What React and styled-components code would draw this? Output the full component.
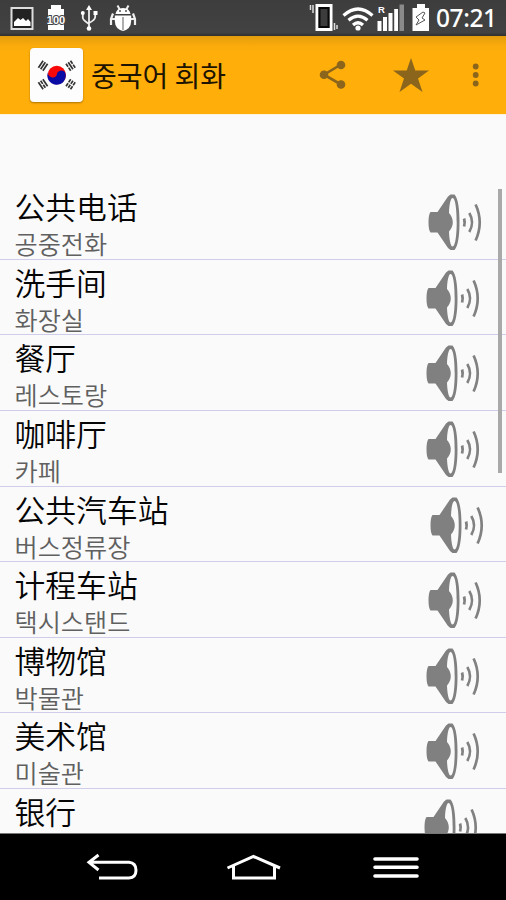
import React from 'react';
import styled, { createGlobalStyle } from 'styled-components';

const Global = createGlobalStyle`
  * { box-sizing: border-box; }
  body { margin: 0; background: #fafafa; }
`;

const Screen = styled.div`
  width: 506px;
  height: 900px;
  display: flex;
  flex-direction: column;
  overflow: hidden;
  background: #fafafa;
  font-family: 'Noto Sans CJK SC', sans-serif;
`;

const StatusBar = styled.header`
  height: 36px;
  flex: none;
  display: flex;
  align-items: flex-start;
  justify-content: space-between;
  background: linear-gradient(#3d3d3d, #424242 90%, #303030);
  color: #fff;
`;

const StatusIcons = styled.svg`
  display: block;
  width: ${(p) => p.$width}px;
  height: 36px;
`;

const StatusRight = styled.div`
  display: flex;
  height: 36px;
`;

const Clock = styled.time`
  width: 70px;
  font: 500 24.5px/36px 'Noto Sans', sans-serif;
  letter-spacing: -0.4px;
`;

const AppBar = styled.div`
  height: 78px;
  flex: none;
  display: flex;
  align-items: center;
  padding-left: 30px;
  background: linear-gradient(#e39d0d, #fbab0b 10px, #ffae0a 16px);
`;

const FlagTile = styled.div`
  width: 53px;
  height: 54px;
  margin-top: -1px;
  border-radius: 4px;
  background: #fdfdfd;
  box-shadow: 0 1px 2px rgba(90, 60, 0, 0.5);
`;

const Title = styled.h1`
  width: 222px;
  margin: -1px 0 0 8px;
  font: 400 28px/40px 'Noto Sans CJK KR', sans-serif;
  color: #1c1300;
  white-space: nowrap;
`;

const Actions = styled.svg`
  display: block;
  width: 193px;
  height: 78px;
`;

const Content = styled.main`
  flex: none;
  height: 720px;
  padding-top: 69px;
  display: grid;
  grid-template-columns: 1fr;
  overflow: hidden;
  border-top: 1px solid #fdf3dc;
  border-bottom: 1px solid #777;
`;

const List = styled.ul`
  grid-area: 1 / 1;
  margin: 0;
  padding: 0;
  list-style: none;
`;

const Row = styled.li`
  height: 75.65px;
  display: flex;
  justify-content: space-between;
  border-bottom: 1.6px solid #cfcdea;
`;

const Words = styled.div`
  padding: 5px 0 0 14.5px;
  white-space: nowrap;
`;

const Chinese = styled.div`
  font: 350 30.8px/34px 'Noto Sans CJK SC', sans-serif;
  color: #050505;
`;

const Korean = styled.div`
  padding-top: 4px;
  font: 350 25.2px/32px 'Noto Sans CJK KR', sans-serif;
  color: #606060;
`;

const Speaker = styled.svg`
  display: block;
  flex: none;
  width: 56px;
  height: 58px;
  margin: 10px ${(p) => 23 - p.$shift}px 0 0;
`;

const ScrollThumb = styled.div`
  grid-area: 1 / 1;
  justify-self: end;
  width: 4px;
  height: 284px;
  margin: 5px 4px 0 0;
  background: #a9a9a9;
`;

const NavBar = styled.nav`
  flex: 1;
  background: #000;
`;

const NavIcons = styled.svg`
  display: block;
  width: 506px;
  height: 66px;
`;

const phrases = [
  ['公共电话', '공중전화', 0.5],
  ['洗手间', '화장실', -1],
  ['餐厅', '레스토랑', -1],
  ['咖啡厅', '카페', -1],
  ['公共汽车站', '버스정류장', 2.5],
  ['计程车站', '택시스탠드', 0.5],
  ['博物馆', '박물관', -1],
  ['美术馆', '미술관', -1],
  ['银行', '', -3],
];

function SpeakerIcon({ shift }) {
  return (
    <Speaker $shift={shift} viewBox="0 0 56 58">
      <path d="M2.5 18H9.500L20 2.500L22.500 0.500H26.500C30 4 31.500 15 31.500 28.300S30 52.500 26.500 56H22.500L20 54L9.500 38.500H2.500Q0.500 36 0.500 28.300T2.500 18Z" fill="#808080" />
      <path d="M24.500 4C27.600 4 28.700 17 28.700 28.300S27.600 52.500 24.500 52.500C22.600 52.500 21.200 45 21 37.500C23.300 35 24.800 32 24.800 28.300S23.300 21.500 21 19C21.200 11 22.600 4 24.500 4Z" fill="#fafafa" />
      <path d="M36.100 24.500Q37.200 28.300 36.100 32.500" stroke="#818181" strokeWidth="2.8" fill="none" />
      <path d="M41.300 19Q46.800 28.300 41.300 38" stroke="#818181" strokeWidth="2.600" fill="none" />
      <path d="M47.600 10.500Q55.800 28.300 47.600 46.500" stroke="#818181" strokeWidth="2.700" fill="none" />
    </Speaker>
  );
}

const barOffsets = [-2.7, 0, 2.7];
const trigrams = [
  { x: -13.8, y: -9.3, turn: 34, broken: [] },
  { x: 13.8, y: -9.3, turn: -34, broken: [0, 2] },
  { x: -13.8, y: 9.3, turn: -34, broken: [1] },
  { x: 13.8, y: 9.3, turn: 34, broken: [0, 1, 2] },
];

function Flag() {
  return (
    <FlagTile>
      <svg width="53" height="54" viewBox="0 0 53 54">
        <circle cx="26.800" cy="27" r="9.200" fill="#f80808" />
        <path d="M18.400 23.300A4.600 4.600 0 0 0 26.800 27A4.600 4.600 0 0 1 35.200 24.500A9.200 9.200 0 1 1 18.400 23.300Z" fill="#0a0aa5" />
        {trigrams.map(({ x, y, turn, broken }) => (
          <g key={`${x},${y}`} transform={`translate(${26.8 + x} ${27 + y}) rotate(${turn})`} stroke="#333" strokeWidth="1.7">
            {barOffsets.map((b, i) => (
              <path key={b} d={`M${b} -4.2V4.2`} strokeDasharray={broken.includes(i) ? '3.700 1' : undefined} />
            ))}
          </g>
        ))}
      </svg>
    </FlagTile>
  );
}

export default function App() {
  return (
    <>
      <Global />
      <Screen>
        <StatusBar>
          <StatusIcons $width={145} viewBox="0 0 145 36">
            <rect x="11.5" y="8" width="21" height="21" fill="#222" stroke="#ddd" strokeWidth="2" />
            <path d="M14 26V22L18 18L20.5 20L23 18L26 21L28 19L30.5 22V26Z" fill="#fff" />
            <path d="M51 5H61V9H64V30H48V9H51Z" fill="#fff" />
            <text x="56" y="23.500" textAnchor="middle" fontSize="11" fontWeight="700" fontFamily="Liberation Sans" fill="#fff" stroke="#444" strokeWidth="2" paintOrder="stroke">100</text>
            <path d="M89 9V29M82.800 14V18Q83 20 89 24M95.200 13V17Q95 20 89 23" stroke="#eee" strokeWidth="1.800" fill="none" />
            <path d="M89 5L92 10H86Z" fill="#fff" />
            <circle cx="82.800" cy="13" r="2" fill="#fff" />
            <rect x="93.500" y="11" width="4" height="4" fill="#fff" />
            <circle cx="89" cy="28.500" r="2.300" fill="#fff" />
            <path d="M117.500 5.500L120 10M128.500 5.500L126 10" stroke="#eee" strokeWidth="2" fill="none" />
            <path d="M115.500 14Q116.500 8 123 8T130.500 14Z" fill="#fff" />
            <path d="M114.800 15.500H131.200V21Q131 29 123 31Q115 29 114.800 21Z" fill="#fff" />
            <path d="M113 13.500L111 19V25M133 13.500L135 19V25M111 19H115M131 19H135" stroke="#eee" strokeWidth="2.200" fill="none" />
            <path d="M123 17V30" stroke="#777" strokeWidth="1.200" />
            <circle cx="120" cy="11" r="0.900" fill="#444" />
            <circle cx="126" cy="11" r="0.900" fill="#444" />
          </StatusIcons>
          <StatusRight>
            <StatusIcons $width={128} viewBox="308 0 128 36">
              <rect x="317" y="5.500" width="14" height="24" fill="#3c3c3c" stroke="#fff" strokeWidth="3" />
              <rect x="319.500" y="8" width="9" height="19" fill="none" stroke="#080808" strokeWidth="2" />
              <path d="M310.500 5V10M313 5V13M334.500 23V30M337 25V29" stroke="#ddd" strokeWidth="1.500" />
              <g stroke="#fff" strokeWidth="3.200" fill="none">
                <path d="M343.500 15.500Q358 2.500 372.500 15.500" />
                <path d="M348.500 20.300Q358 12 367.500 20.300" />
                <path d="M353 25Q358 20.500 363 25" />
              </g>
              <circle cx="358" cy="28" r="2.600" fill="#fff" />
              <text x="378" y="13" fontSize="9.500" fontWeight="700" fontFamily="Liberation Sans" fill="#fff">R</text>
              <path d="M377.500 21H381.500V31H377.500ZM383 17H387V31H383ZM388.500 13H392.500V31H388.500ZM394.200 9H398V31H394.200Z" fill="#fff" />
              <path d="M399.500 4.500H404V31H399.500Z" fill="#8a8a8a" />
              <path d="M417 4H425V8H429V31H412.500V8H417Z" fill="#fff" />
              <path d="M423 12L416 17L419 20L416 25L425 20L422 18L425 13Z" fill="#fff" stroke="#555" strokeWidth="1" />
            </StatusIcons>
            <Clock>07:21</Clock>
          </StatusRight>
        </StatusBar>
        <AppBar>
          <Flag />
          <Title>중국어 회화</Title>
          <Actions viewBox="313 36 193 78">
            <path d="M341 64.500L324 74.700L341 84.500" stroke="#8a651b" strokeWidth="2.600" fill="none" />
            <g fill="#8a651b">
              <circle cx="341" cy="65" r="4.300" />
              <circle cx="324" cy="74.700" r="4.300" />
              <circle cx="341" cy="84.500" r="4.300" />
              <path d="M411 58L415.300 70.500H429L418 78.500L422.500 92L411 83.800L399.500 92L404 78.500L393 70.500H406.700Z" />
              <circle cx="475.700" cy="66.500" r="2.900" />
              <circle cx="475.700" cy="75" r="2.900" />
              <circle cx="475.700" cy="83.500" r="2.900" />
            </g>
          </Actions>
        </AppBar>
        <Content>
          <List>
            {phrases.map(([zh, ko, shift]) => (
              <Row key={zh}>
                <Words>
                  <Chinese lang="zh">{zh}</Chinese>
                  {ko && <Korean lang="ko">{ko}</Korean>}
                </Words>
                <SpeakerIcon shift={shift} />
              </Row>
            ))}
          </List>
          <ScrollThumb />
        </Content>
        <NavBar>
          <NavIcons viewBox="0 834 506 66">
            <g stroke="#fff" strokeWidth="3" fill="none">
              <path d="M98.500 855L89 862.300L98.500 870M90 862.300H129Q136 863 136 870.300T129 878H99" />
              <path d="M227.500 868L253.500 856.500L280 868M233.500 866V878H274.500V866" />
              <path d="M375 859H417M375 867.300H417M375 876H417" strokeWidth="3.600" strokeLinecap="round" />
            </g>
          </NavIcons>
        </NavBar>
      </Screen>
    </>
  );
}
